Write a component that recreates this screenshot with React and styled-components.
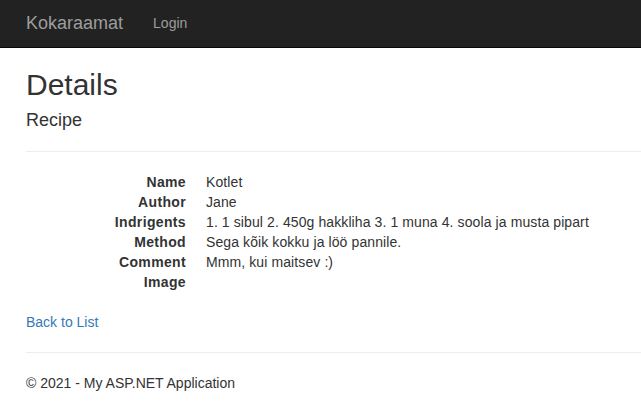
import React from "react";
import styled, { createGlobalStyle } from "styled-components";

const GlobalStyle = createGlobalStyle`
  html, body { margin: 0; padding: 0; background: #fff; }
  body {
    font-family: "Liberation Sans", Arial, Helvetica, sans-serif;
    font-size: 14px;
    line-height: 1.42857143;
    color: #333;
  }
  * { box-sizing: border-box; }
`;

const Navbar = styled.nav`
  display: flex;
  align-items: flex-start;
  height: 48px;
  background: #222;
  border-bottom: 1px solid #080808;
  padding-left: 11px;
`;

const Brand = styled.a`
  display: block;
  padding: 13px 15px 0 15px;
  font-size: 18px;
  line-height: 20px;
  color: #9d9d9d;
  text-decoration: none;
`;

const NavLink = styled.a`
  display: block;
  padding: 13px 15px 0 15px;
  font-size: 14px;
  line-height: 20px;
  color: #9d9d9d;
  text-decoration: none;
`;

const Content = styled.main`
  padding-left: 26px;
  display: flow-root;
`;

const Title = styled.h2`
  font-size: 30px;
  font-weight: 500;
  line-height: 1.1;
  margin: 20px 0 10px;
`;

const Subtitle = styled.h4`
  font-size: 18px;
  font-weight: 500;
  line-height: 1.1;
  margin: 10px 0 10px;
`;

const Rule = styled.hr`
  margin: 20px 0;
  border: 0;
  border-top: 1px solid #eee;
  height: 0;
`;

const DetailList = styled.dl`
  display: grid;
  grid-template-columns: 160px 1fr;
  column-gap: 20px;
  margin: 0 0 20px;
`;

const Term = styled.dt`
  font-weight: 700;
  text-align: right;
  white-space: nowrap;
  overflow: hidden;
  text-overflow: ellipsis;
  min-height: 20px;
  letter-spacing: 0.35px;
`;

const Desc = styled.dd`
  margin: 0;
  min-height: 20px;
  letter-spacing: 0.1px;
`;

const Para = styled.p`
  margin: 0 0 10px;
`;

const Link = styled.a`
  color: #337ab7;
  text-decoration: none;
`;

const rows = [
  ["Name", "Kotlet"],
  ["Author", "Jane"],
  ["Indrigents", "1. 1 sibul 2. 450g hakkliha 3. 1 muna 4. soola ja musta pipart"],
  ["Method", "Sega kõik kokku ja löö pannile."],
  ["Comment", "Mmm, kui maitsev :)"],
  ["Image", ""],
];

export default function App() {
  return (
    <>
      <GlobalStyle />
      <Navbar>
        <Brand href="#">Kokaraamat</Brand>
        <NavLink href="#">Login</NavLink>
      </Navbar>
      <Content>
        <Title>Details</Title>
        <Subtitle>Recipe</Subtitle>
        <Rule />
        <DetailList>
          {rows.map(([k, v]) => (
            <React.Fragment key={k}>
              <Term>{k}</Term>
              <Desc>{v}</Desc>
            </React.Fragment>
          ))}
        </DetailList>
        <Para>
          <Link href="#">Back to List</Link>
        </Para>
        <Rule />
        <footer>
          <Para>© 2021 - My ASP.NET Application</Para>
        </footer>
      </Content>
    </>
  );
}
